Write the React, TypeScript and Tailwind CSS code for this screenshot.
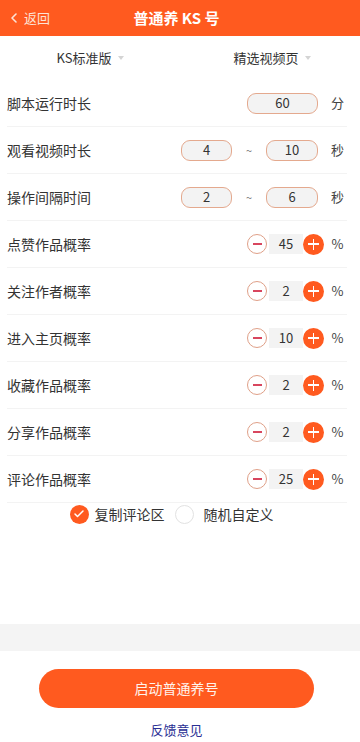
import { Check, ChevronLeft } from 'lucide-react';

const FONT = { fontFamily: '"Noto Sans CJK SC", "Noto Sans", sans-serif' };

const STEPPERS: { label: string; value: number }[] = [
  { label: '点赞作品概率', value: 45 },
  { label: '关注作者概率', value: 2 },
  { label: '进入主页概率', value: 10 },
  { label: '收藏作品概率', value: 2 },
  { label: '分享作品概率', value: 2 },
  { label: '评论作品概率', value: 25 },
];

function Caret() {
  return (
    <svg className="ml-[6px]" width="6" height="4" viewBox="0 0 6 4">
      <path d="M0 0h6L3 4z" fill="#d4d4d4" />
    </svg>
  );
}

function ValueBox({ value, width }: { value: number; width: string }) {
  return (
    <div
      className={`flex h-[21px] ${width} items-center justify-center rounded-[9px] border border-[#e4a98e] bg-[#f3f3f3] text-[13px] text-[#333]`}
    >
      {value}
    </div>
  );
}

function Unit({ children, className = '' }: { children: string; className?: string }) {
  return <span className={`w-[13px] text-center text-[13px] text-[#444] ${className}`}>{children}</span>;
}

function Row({ label, children }: { label: string; children: React.ReactNode }) {
  return (
    <div className="flex h-[47px] items-center justify-between border-b border-[#f3f3f3] pr-[3px]">
      <span className="text-[14px] text-[#333]">{label}</span>
      <div className="flex items-center">{children}</div>
    </div>
  );
}

function Stepper({ value }: { value: number }) {
  return (
    <>
      <button className="flex h-[20px] w-[20px] items-center justify-center rounded-full border border-[#dfa088] bg-white">
        <span className="h-[1.5px] w-[9px] bg-[#d8465e]" />
      </button>
      <div className="ml-[2px] flex h-[20px] w-[34px] items-center justify-center bg-[#f3f3f3] text-[13px] text-[#333]">
        {value}
      </div>
      <button className="relative flex h-[21px] w-[21px] items-center justify-center rounded-full bg-[#ff5a1f]">
        <span className="absolute h-[1.5px] w-[11px] bg-white" />
        <span className="absolute h-[11px] w-[1.5px] bg-white" />
      </button>
      <Unit className="ml-[7px]">%</Unit>
    </>
  );
}

export default function App() {
  return (
    <div className="flex h-[742px] flex-col bg-white" style={FONT}>
      <header className="relative flex h-[36px] items-center justify-center bg-[#ff5a1f] pr-[7px] text-white">
        <button className="absolute left-[6px] flex items-center text-[13px] text-[#fde3d6]">
          <ChevronLeft size={16} strokeWidth={2.4} />
          <span className="ml-[2px]">返回</span>
        </button>
        <h1 className="text-[15px] font-semibold">普通养 KS 号</h1>
      </header>

      <div className="flex h-[44px] items-center text-[13px] text-[#333]">
        <div className="flex flex-1 items-center justify-center pl-[2px]">
          KS标准版
          <Caret />
        </div>
        <div className="flex flex-1 items-center justify-center pl-[6px]">
          精选视频页
          <Caret />
        </div>
      </div>

      <div className="pl-[7px] pr-[13px]">
        <Row label="脚本运行时长">
          <ValueBox value={60} width="w-[71px]" />
          <Unit className="ml-[13px]">分</Unit>
        </Row>
        <Row label="观看视频时长">
          <ValueBox value={4} width="w-[51px]" />
          <span className="w-[34px] text-center text-[11px] text-[#777]">~</span>
          <ValueBox value={10} width="w-[52px]" />
          <Unit className="ml-[13px]">秒</Unit>
        </Row>
        <Row label="操作间隔时间">
          <ValueBox value={2} width="w-[51px]" />
          <span className="w-[34px] text-center text-[11px] text-[#777]">~</span>
          <ValueBox value={6} width="w-[52px]" />
          <Unit className="ml-[13px]">秒</Unit>
        </Row>
        {STEPPERS.map((item) => (
          <Row key={item.label} label={item.label}>
            <Stepper value={item.value} />
          </Row>
        ))}
      </div>

      <div className="flex h-[22px] items-center justify-center pr-[17px] text-[14px] text-[#333]">
        <span className="flex h-[19px] w-[19px] items-center justify-center rounded-full bg-[#ff5a1f]">
          <Check size={12} strokeWidth={3} color="white" />
        </span>
        <span className="ml-[6px]">复制评论区</span>
        <span className="ml-[10px] h-[19px] w-[19px] rounded-full border border-[#e2e2e2]" />
        <span className="ml-[10px]">随机自定义</span>
      </div>

      <div className="flex-1" />

      <div className="h-[27px] bg-[#f4f4f4]" />

      <div className="flex h-[91px] flex-col items-center pr-[7px]">
        <button className="mt-[18px] h-[39px] w-[275px] rounded-full bg-[#ff5a1f] text-[14px] text-[#fff3ec]">
          启动普通养号
        </button>
        <button className="mt-[13px] text-[13px] leading-[18px] text-[#2a2f94]">反馈意见</button>
      </div>
    </div>
  );
}
